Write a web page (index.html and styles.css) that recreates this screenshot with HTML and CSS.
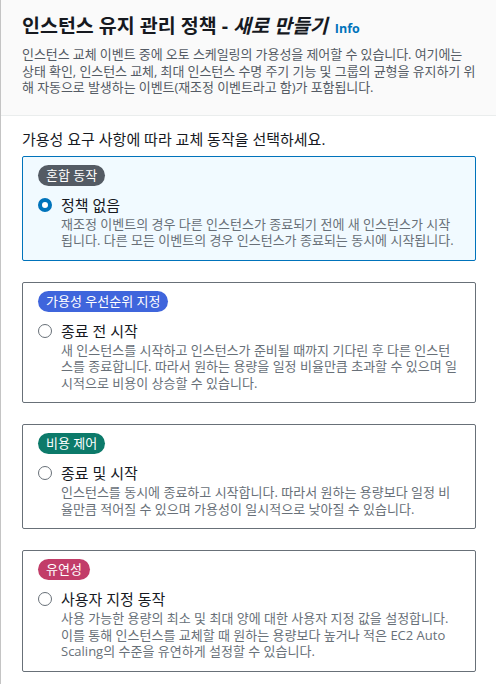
FILE: index.html
```html
<!DOCTYPE html>
<html lang="ko">
<head>
<meta charset="utf-8">
<title>인스턴스 유지 관리 정책</title>
<link rel="stylesheet" href="styles.css">
</head>
<body>
<div class="page">
  <header class="header">
    <h1 class="title">인스턴스 유지 관리 정책 - <em>새로 만들기</em> <a class="info" href="#">Info</a></h1>
    <p class="desc">인스턴스 교체 이벤트 중에 오토 스케일링의 가용성을 제어할 수 있습니다. 여기에는<br>상태 확인, 인스턴스 교체, 최대 인스턴스 수명 주기 기능 및 그룹의 균형을 유지하기 위<br>해 자동으로 발생하는 이벤트(재조정 이벤트라고 함)가 포함됩니다.</p>
  </header>
  <main class="content">
    <p class="prompt">가용성 요구 사항에 따라 교체 동작을 선택하세요.</p>
    <div class="cards">
      <label class="card selected">
        <span class="badge badge-gray">혼합 동작</span>
        <span class="option">
          <span class="radio checked"></span>
          <span class="option-label">정책 없음</span>
        </span>
        <span class="option-desc">재조정 이벤트의 경우 다른 인스턴스가 종료되기 전에 새 인스턴스가 시작됩니다. 다른 모든 이벤트의 경우 인스턴스가 종료되는 동시에 시작됩니다.</span>
      </label>
      <label class="card">
        <span class="badge badge-blue">가용성 우선순위 지정</span>
        <span class="option">
          <span class="radio"></span>
          <span class="option-label">종료 전 시작</span>
        </span>
        <span class="option-desc">새 인스턴스를 시작하고 인스턴스가 준비될 때까지 기다린 후 다른 인스턴스를 종료합니다. 따라서 원하는 용량을 일정 비율만큼 초과할 수 있으며 일시적으로 비용이 상승할 수 있습니다.</span>
      </label>
      <label class="card">
        <span class="badge badge-green">비용 제어</span>
        <span class="option">
          <span class="radio"></span>
          <span class="option-label">종료 및 시작</span>
        </span>
        <span class="option-desc">인스턴스를 동시에 종료하고 시작합니다. 따라서 원하는 용량보다 일정 비율만큼 적어질 수 있으며 가용성이 일시적으로 낮아질 수 있습니다.</span>
      </label>
      <label class="card">
        <span class="badge badge-red">유연성</span>
        <span class="option">
          <span class="radio"></span>
          <span class="option-label">사용자 지정 동작</span>
        </span>
        <span class="option-desc">사용 가능한 용량의 최소 및 최대 양에 대한 사용자 지정 값을 설정합니다. 이를 통해 인스턴스를 교체할 때 원하는 용량보다 높거나 적은 EC2 Auto Scaling의 수준을 유연하게 설정할 수 있습니다.</span>
      </label>
    </div>
  </main>
</div>
</body>
</html>
```

FILE: styles.css
```css
* { box-sizing: border-box; }
html, body { margin: 0; padding: 0; background: #ffffff; }
body {
  font-family: "Open Sans", "Noto Sans CJK KR", sans-serif;
  color: #16191f;
}
.page {
  min-height: 684px;
  border-left: 1px solid #c4c4c4;
}
.header {
  background: #fafafa;
  border-bottom: 1px solid #eaeded;
  padding: 13px 18px 19px 21px;
}
.title {
  margin: 0;
  font-size: 19.5px;
  line-height: 26px;
  font-weight: 700;
  color: #16191f;
}
.title em { font-style: italic; }
.info {
  font-size: 12.5px;
  font-weight: 700;
  color: #0073bb;
  text-decoration: none;
  margin-left: 2px;
}
.desc {
  margin: 4px 0 0;
  font-size: 13px;
  line-height: 16.5px;
  letter-spacing: -0.08px;
  color: #545b64;
}
.content {
  padding: 13px 20px 20px 21px;
}
.prompt {
  margin: 0 0 7px;
  font-size: 15px;
  line-height: 20px;
  color: #16191f;
}
.cards {
  display: flex;
  flex-direction: column;
  gap: 21px;
}
.card {
  display: flex;
  flex-direction: column;
  align-items: flex-start;
  border: 1px solid #687078;
  border-radius: 2px;
  padding: 8px 16px 11px 15px;
  background: #ffffff;
  cursor: pointer;
}
.card.selected {
  border-color: #0073bb;
  background: #f1faff;
}
.badge {
  display: inline-block;
  height: 21px;
  line-height: 21px;
  padding: 0 8px;
  border-radius: 11px;
  font-size: 13px;
  color: #ffffff;
}
.badge-gray { background: #545b64; }
.badge-blue { background: #3f65dc; }
.badge-green { background: #0c7a6a; }
.badge-red { background: #c23d69; }
.option {
  display: flex;
  align-items: center;
  gap: 9px;
  margin-top: 8px;
  height: 22px;
}
.radio {
  width: 14px;
  height: 14px;
  border-radius: 50%;
  border: 1.5px solid #687078;
  background: #ffffff;
  flex: none;
}
.radio.checked {
  border: 4px solid #0073bb;
}
.option-label {
  font-size: 15px;
  line-height: 22px;
  color: #16191f;
}
.option-desc {
  display: block;
  padding-left: 23px;
  font-size: 13px;
  line-height: 16.5px;
  color: #687078;
}
```
